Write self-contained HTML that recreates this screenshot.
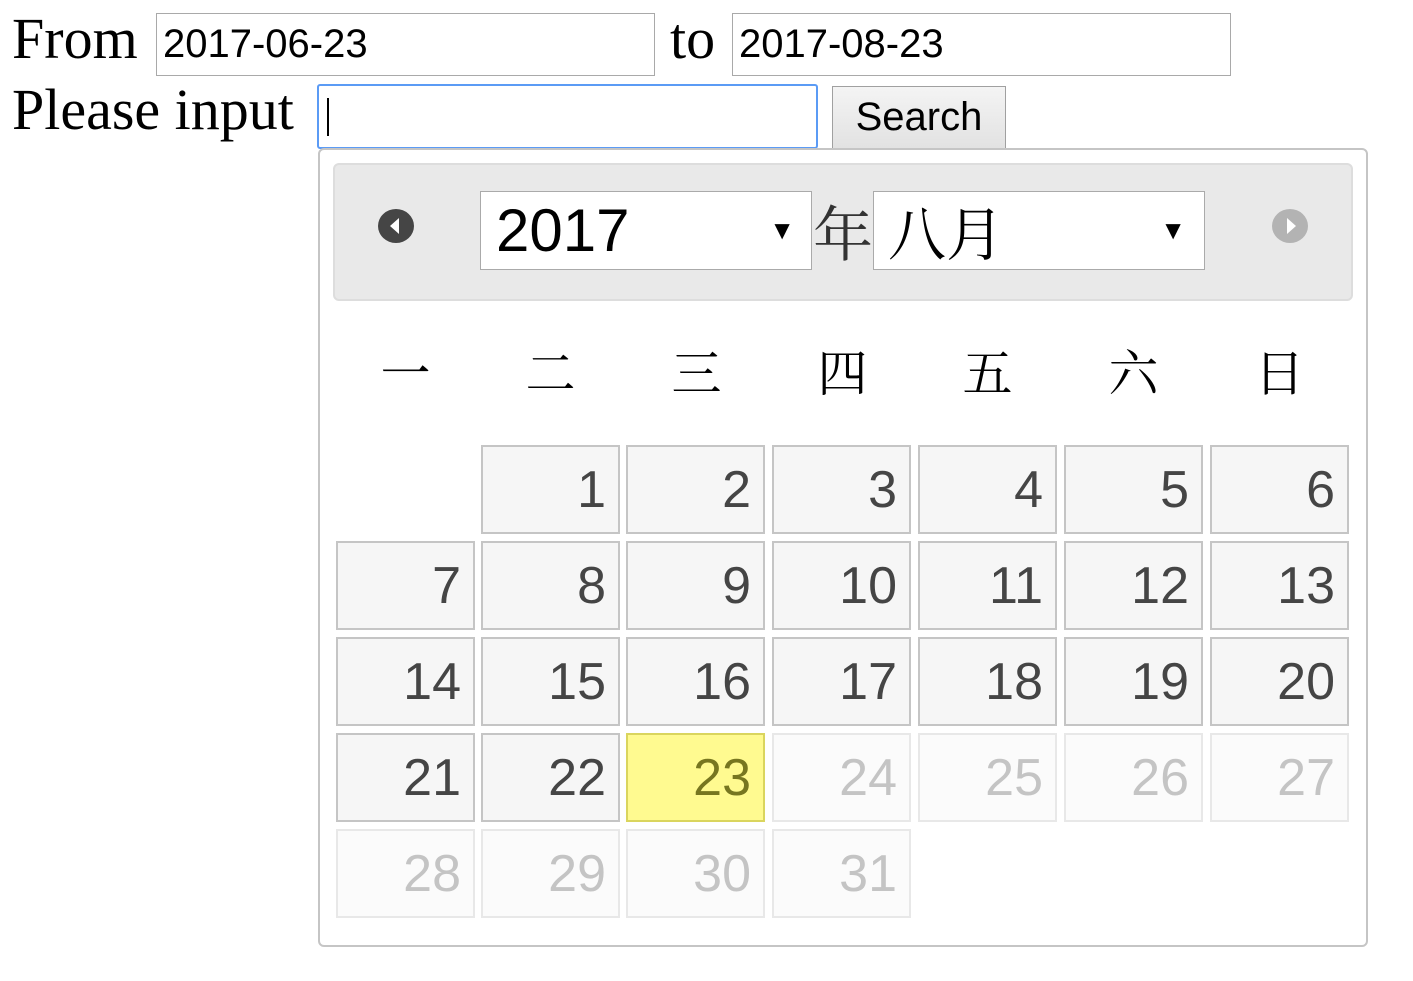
<!DOCTYPE html>
<html><head><meta charset="utf-8"><style>
*{box-sizing:border-box;margin:0;padding:0}
body{width:1413px;height:981px;background:#fff;position:relative;overflow:hidden;font-family:"Liberation Sans",sans-serif}
.a{position:absolute}
.lbl{font-family:"Liberation Serif",serif;font-size:58px;color:#000;line-height:1}
.inp{border:1px solid #a9a9a9;background:#fff;font-size:40px;line-height:60px;padding-left:6px;color:#000}
.c{position:absolute;width:139px;height:89px;border:2px solid #c5c5c5;background:#f6f6f6;color:#454545;font-size:52px;text-align:right;padding-right:12px;line-height:87px}
.d{border-color:#e8e8e8;background:#fbfbfb;color:#c4c4c4}
.h{border-color:#dad55e;background:#fffa90;color:#777620}
.wd{position:absolute;top:340px;width:139px;text-align:center;font-family:"Noto Serif CJK SC",serif;font-size:50px;color:#000;line-height:60px}
</style></head><body>
<div class="a lbl" style="left:12px;top:10px">From</div>
<div class="a inp" style="left:156px;top:13px;width:499px;height:63px">2017-06-23</div>
<div class="a lbl" style="left:670px;top:10px">to</div>
<div class="a inp" style="left:732px;top:13px;width:499px;height:63px">2017-08-23</div>
<div class="a lbl" style="left:12px;top:81px">Please input</div>
<div class="a" style="left:317px;top:84px;width:501px;height:65px;border:2px solid #5b9bf5;border-radius:3px;background:#fff"><div style="position:absolute;left:8px;top:12px;width:2px;height:38px;background:#000"></div></div>
<div class="a" style="left:832px;top:86px;width:174px;height:63px;border:1px solid #a0a0a0;background:linear-gradient(#f4f4f4,#e2e2e2);font-size:40px;text-align:center;line-height:60px;color:#000">Search</div>

<div class="a" style="left:318px;top:148px;width:1050px;height:799px;border:2px solid #c5c5c5;border-radius:6px;background:#fff"></div>
<div class="a" style="left:333px;top:163px;width:1020px;height:138px;border:2px solid #ddd;border-radius:6px;background:#e9e9e9"></div>
<svg class="a" style="left:377px;top:207px" width="38" height="38" viewBox="0 0 38 38"><ellipse cx="19" cy="19" rx="18" ry="17" fill="#454545"/><path d="M22 11 L13 19 L22 27 Z" fill="#fff"/></svg>
<svg class="a" style="left:1271px;top:207px" width="38" height="38" viewBox="0 0 38 38"><ellipse cx="19" cy="19" rx="18" ry="17" fill="#b3b3b3"/><path d="M16 11 L25 19 L16 27 Z" fill="#fff"/></svg>
<div class="a" style="left:480px;top:191px;width:332px;height:79px;border:1px solid #aaa;background:#fff;font-size:60px;line-height:77px;padding-left:15px;color:#000">2017<span style="position:absolute;right:16px;top:0;font-size:26px">▼</span></div>
<div class="a" style="left:813px;top:196px;font-family:'Noto Serif CJK SC',serif;font-size:60px;line-height:70px;color:#333">年</div>
<div class="a" style="left:873px;top:191px;width:332px;height:79px;border:1px solid #aaa;background:#fff;font-family:'Noto Serif CJK SC',serif;font-size:58px;line-height:77px;padding-left:14px;color:#000">八月<span style="position:absolute;right:18px;top:0;font-size:26px;font-family:'Liberation Sans',sans-serif">▼</span></div>

<div class="wd" style="left:336px">一</div>
<div class="wd" style="left:481px">二</div>
<div class="wd" style="left:627px">三</div>
<div class="wd" style="left:773px">四</div>
<div class="wd" style="left:918px">五</div>
<div class="wd" style="left:1064px">六</div>
<div class="wd" style="left:1210px">日</div>

<div class="c" style="left:481px;top:445px">1</div>
<div class="c" style="left:626px;top:445px">2</div>
<div class="c" style="left:772px;top:445px">3</div>
<div class="c" style="left:918px;top:445px">4</div>
<div class="c" style="left:1064px;top:445px">5</div>
<div class="c" style="left:1210px;top:445px">6</div>

<div class="c" style="left:336px;top:541px">7</div>
<div class="c" style="left:481px;top:541px">8</div>
<div class="c" style="left:626px;top:541px">9</div>
<div class="c" style="left:772px;top:541px">10</div>
<div class="c" style="left:918px;top:541px">11</div>
<div class="c" style="left:1064px;top:541px">12</div>
<div class="c" style="left:1210px;top:541px">13</div>

<div class="c" style="left:336px;top:637px">14</div>
<div class="c" style="left:481px;top:637px">15</div>
<div class="c" style="left:626px;top:637px">16</div>
<div class="c" style="left:772px;top:637px">17</div>
<div class="c" style="left:918px;top:637px">18</div>
<div class="c" style="left:1064px;top:637px">19</div>
<div class="c" style="left:1210px;top:637px">20</div>

<div class="c" style="left:336px;top:733px">21</div>
<div class="c" style="left:481px;top:733px">22</div>
<div class="c h" style="left:626px;top:733px">23</div>
<div class="c d" style="left:772px;top:733px">24</div>
<div class="c d" style="left:918px;top:733px">25</div>
<div class="c d" style="left:1064px;top:733px">26</div>
<div class="c d" style="left:1210px;top:733px">27</div>

<div class="c d" style="left:336px;top:829px">28</div>
<div class="c d" style="left:481px;top:829px">29</div>
<div class="c d" style="left:626px;top:829px">30</div>
<div class="c d" style="left:772px;top:829px">31</div>
</body></html>
